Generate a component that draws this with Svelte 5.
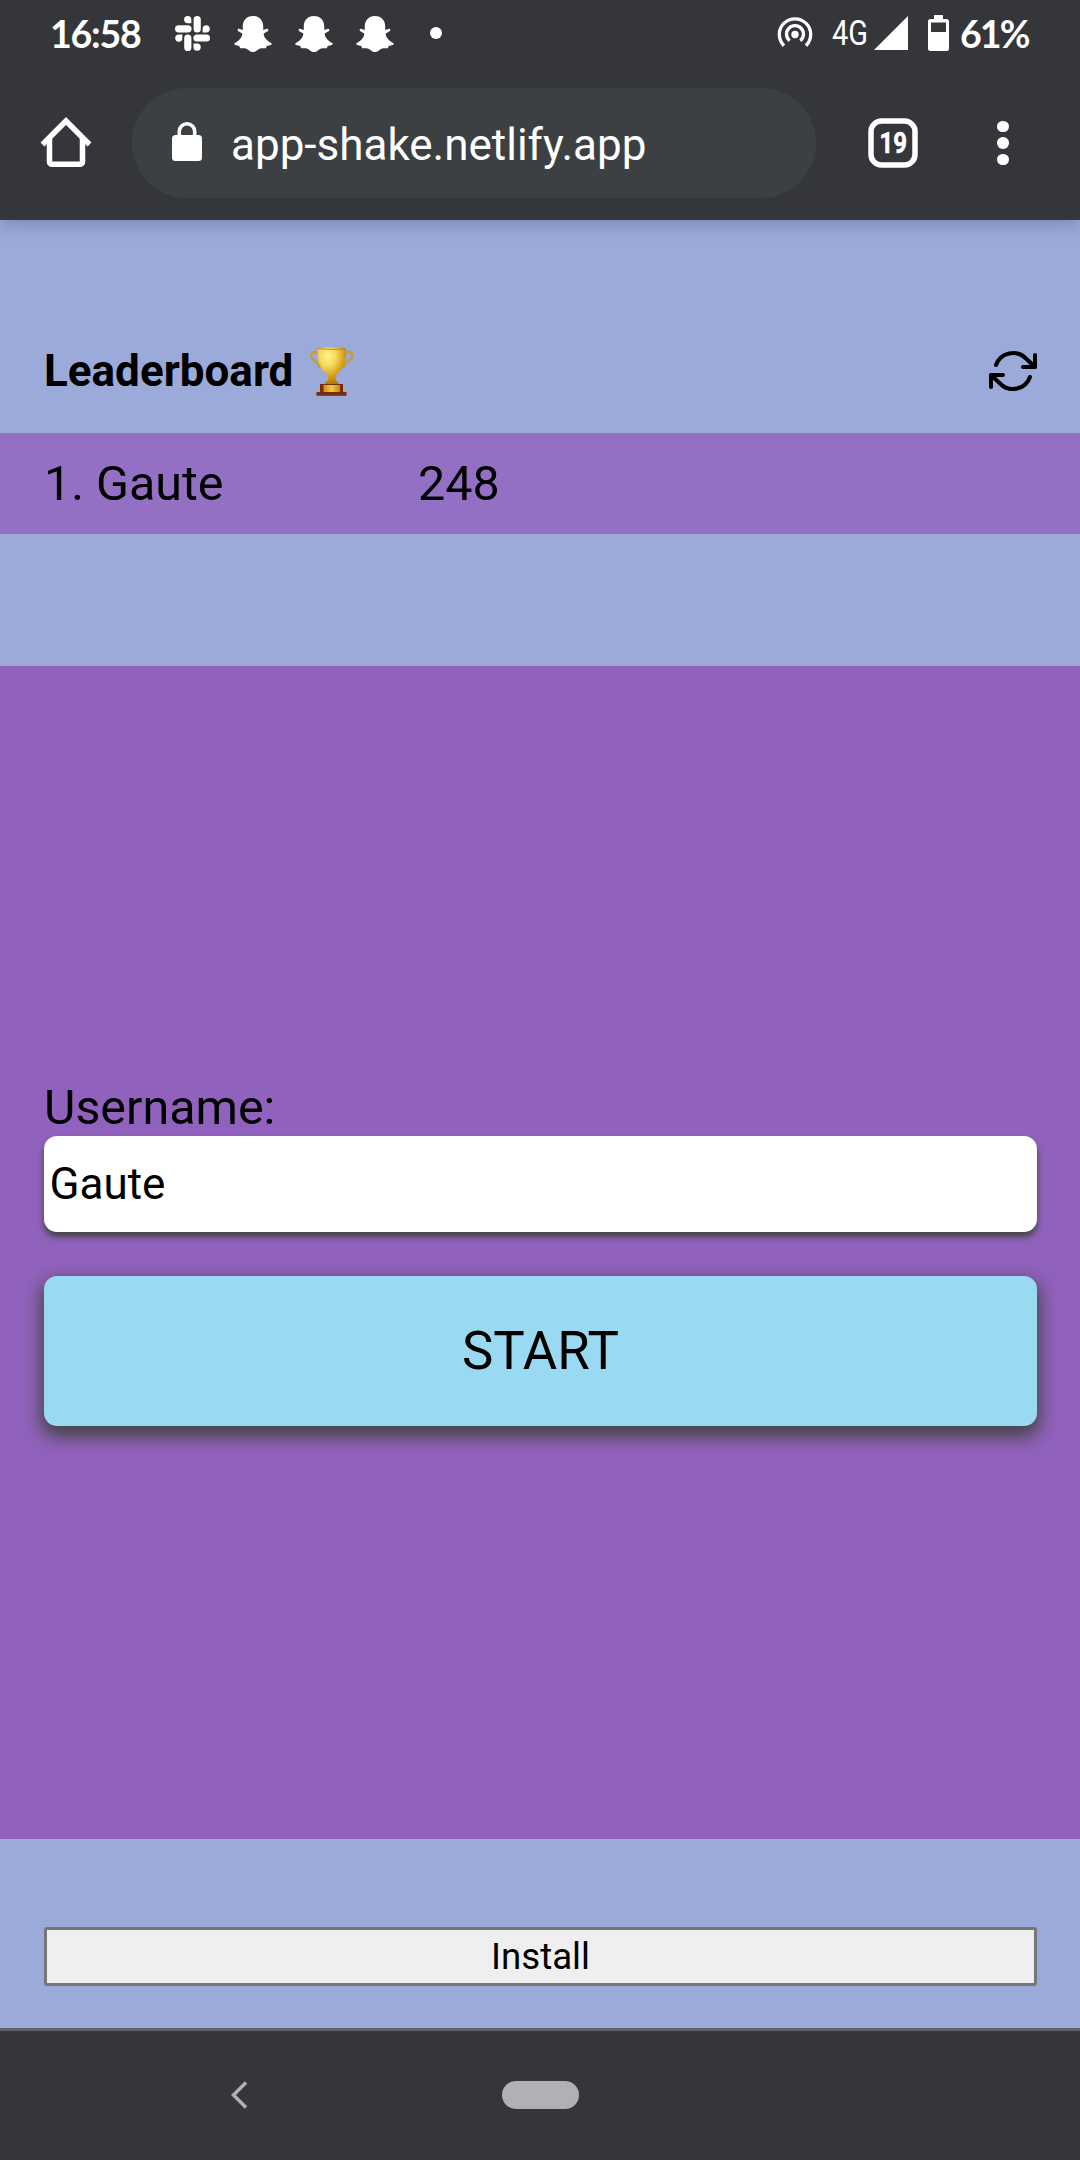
<script>
  const snaps = [0, 1, 2];
  const leaders = [{ name: 'Gaute', score: 248 }];
  let username = $state('Gaute');
</script>

<div class="screen">
  <header class="chrome">
    <div class="status">
      <div class="left">
        <span class="clock">16:58</span>
        <svg class="slack" width="35" height="35" viewBox="0 0 35 35" fill="#fff">
          <rect x="18.6" y="0" width="7.2" height="16.6" rx="3.6" />
          <path d="M12.7 0a3.6 3.6 0 1 0 0 7.2h3.6V3.6A3.6 3.6 0 0 0 12.7 0Z" />
          <rect x="0" y="9.2" width="16.6" height="7.2" rx="3.6" />
          <path d="M27.6 16.4v-3.6a3.6 3.6 0 1 1 3.6 3.6Z" />
          <rect x="18.4" y="18.4" width="16.6" height="7.2" rx="3.6" />
          <path d="M18.5 27.6h3.6a3.6 3.6 0 1 1-3.6 3.6Z" />
          <rect x="9.2" y="18.4" width="7.2" height="16.6" rx="3.6" />
          <path d="M7.4 18.5v3.6a3.6 3.6 0 1 1-3.6-3.6Z" />
        </svg>
        {#each snaps as s (s)}
          <svg class="snap" width="38" height="36" viewBox="0 0 38 36" fill="#fff">
            <path d="M19 0C12.600 0 8.800 4.500 8.800 10.300V14L5 12.800C3.300 12.800 3.300 14.600 4.300 15.300L8.300 17.600C8.300 21.500 4.600 25.300 .8 27C-.2 27.600 .1 28.500 1.200 28.900L5.300 30.100L6.100 32.300L10.700 32.200C13.800 32.400 15.600 36 19 36C22.400 36 24.200 32.400 27.300 32.200L31.900 32.300L32.700 30.100L36.800 28.900C37.900 28.500 38.200 27.600 37.200 27C33.400 25.300 29.700 21.500 29.700 17.600L33.700 15.300C34.700 14.600 34.700 12.800 33 12.800L29.200 14V10.300C29.200 4.500 25.400 0 19 0Z" />
          </svg>
        {/each}
        <span class="more"></span>
      </div>
      <div class="right">
        <svg width="36" height="32" viewBox="0 0 36 32" fill="none" stroke="#fff" stroke-width="3.300">
          <circle cx="18" cy="17.500" r="3.700" fill="#fff" stroke="none" />
          <path d="M12.700 23.700A8.500 8.500 0 1 1 23.300 23.700" />
          <path d="M7 28.700A15.700 15.700 0 1 1 29 28.700" />
        </svg>
        <svg class="net" width="38" height="36" viewBox="0 0 38 36">
          <text x="0" y="30" textLength="36" lengthAdjust="spacingAndGlyphs">4G</text>
        </svg>
        <svg class="signal" width="34" height="34" viewBox="0 0 34 34" fill="#fff"><path d="M34 0V34H0Z" /></svg>
        <svg class="battery" width="21" height="36" viewBox="0 0 21 36">
          <path fill="#fff" fill-rule="evenodd" d="M6 0H15V4H18.500A2.500 2.500 0 0 1 21 6.500V33.500A2.500 2.500 0 0 1 18.500 36H2.500A2.500 2.500 0 0 1 0 33.500V6.500A2.500 2.500 0 0 1 2.500 4H6ZM3 7.500V17H18V7.500Z" />
        </svg>
        <span class="percent">61%</span>
      </div>
    </div>
    <div class="toolbar">
      <svg class="home" width="52" height="52" viewBox="0 0 52 52" fill="none" stroke="#fff" stroke-width="5.500">
        <path d="M2.500 27.500L26 4L49.500 27.500" />
        <path d="M9.500 21V44.500A2.700 2.700 0 0 0 12.200 47.300H39.800A2.700 2.700 0 0 0 42.500 44.500V21" />
      </svg>
      <div class="omnibox">
        <svg width="30" height="40" viewBox="0 0 30 40">
          <rect x="0" y="13" width="30" height="26" rx="3.500" fill="#fff" />
          <path d="M7.300 14V9.500A7.700 7.700 0 0 1 22.700 9.500V14" fill="none" stroke="#fff" stroke-width="3.600" />
        </svg>
        <span>app-shake.netlify.app</span>
      </div>
      <svg class="tabs" width="50" height="50" viewBox="0 0 50 50">
        <rect x="3" y="3" width="44" height="44" rx="10.500" fill="none" stroke="#fff" stroke-width="5.500" />
        <text x="11.500" y="34.500" textLength="27.500" lengthAdjust="spacingAndGlyphs">19</text>
      </svg>
      <div class="menu"><i></i><i></i><i></i></div>
    </div>
  </header>

  <section class="board">
    <div class="heading">
      <h3>Leaderboard</h3>
      <svg class="trophy" width="44" height="49" viewBox="0 0 44 49">
        <defs>
          <radialGradient id="cup" cx=".36" cy=".22" r=".75">
            <stop offset="0" stop-color="#fff38a" />
            <stop offset=".35" stop-color="#f6dc62" />
            <stop offset=".8" stop-color="#d19910" />
            <stop offset="1" stop-color="#b77b00" />
          </radialGradient>
          <linearGradient id="plate">
            <stop offset="0" stop-color="#c9940c" />
            <stop offset=".5" stop-color="#eccb50" />
            <stop offset="1" stop-color="#c48a08" />
          </linearGradient>
        </defs>
        <g fill="none" stroke="#c2a030" stroke-width="2.300">
          <path d="M9 7.500C6 3 1.200 4.500 1.200 9C1.200 14 9 14.500 10 19.500H7.500" />
          <path d="M34.500 7.500C37.500 3 42.300 4.500 42.300 9C42.300 14 34.500 14.500 33.500 19.500H36" />
        </g>
        <path fill="url(#cup)" d="M7.500 1.500C11.500 0 32 0 36 1.500C36 13 35 19.500 28.500 25.500C25 28.500 24.500 32 26.500 34C28 35.500 29 36 29 38H14.500C14.500 36 15.500 35.500 17 34C19 32 18.500 28.500 15 25.500C8.500 19.500 7.500 13 7.500 1.500Z" />
        <path fill="none" stroke="#b58a20" stroke-width="1" d="M8 1.500C14 2.600 29.500 2.600 35.500 1.500" />
        <path fill="#7b2b0c" d="M10 37H33V45H36.500V48.800H6.500V45H10Z" />
        <path fill="url(#plate)" d="M13.500 38H30V45H13.500Z" />
      </svg>
      <svg class="refresh" width="48" height="48" viewBox="0 0 24 24" fill="none" stroke="#000" stroke-width="2" stroke-linecap="round" stroke-linejoin="round">
        <path d="M23 4v6h-6" />
        <path d="M1 20v-6h6" />
        <path d="M3.510 9a9 9 0 0 1 14.850-3.360L23 10M1 14l4.640 4.360A9 9 0 0 0 20.490 15" />
      </svg>
    </div>
    {#each leaders as l, i (l.name)}
      <div class="row"><span>{i + 1}. {l.name}</span><span>{l.score}</span></div>
    {/each}
  </section>

  <main>
    <label for="username">Username:</label>
    <input id="username" bind:value={username} />
    <button class="start">START</button>
  </main>

  <footer><button class="install">Install</button></footer>

  <nav>
    <svg class="back" width="19" height="28" viewBox="0 0 19 28" fill="none" stroke="#afb1b3" stroke-width="3.500"><path d="M16 1.500L3.500 14L16 26.500" /></svg>
    <span class="handle"></span>
  </nav>
</div>

<style>
  :global(body) { margin: 0; }
  .screen {
    width: 1080px;
    height: 2160px;
    display: flex;
    flex-direction: column;
    background: #9baad9;
    font-family: Roboto, "Liberation Sans", sans-serif;
    color: #000;
    overflow: hidden;
  }
  svg { display: block; flex: none; overflow: visible; }
  .chrome {
    height: 220px;
    flex: none;
    background: #35363a;
    color: #fff;
    box-shadow: 0 2px 18px rgba(50, 50, 80, .35);
  }
  .status {
    height: 66px;
    display: flex;
    justify-content: space-between;
    padding: 0 51px 0 50px;
    box-sizing: border-box;
  }
  .left, .right { display: flex; align-items: center; }
  .clock, .percent {
    font: 700 37.500px/46px Lato, sans-serif;
    white-space: nowrap;
  }
  .clock { width: 125px; padding-top: 2px; letter-spacing: -1.200px; }
  .slack { margin-right: 24px; }
  .snap { margin: 1px 23px 0 0; }
  .more { width: 12px; height: 12px; border-radius: 50%; background: #fff; margin-left: 13px; }
  .net { margin-left: 19px; }
  .net text { font-size: 35px; fill: #fff; }
  .signal { margin-left: 4px; }
  .battery { margin: 0 11px 0 20px; }
  .percent { padding-top: 2px; width: 69px; letter-spacing: -1.900px; }
  .toolbar { height: 154px; display: flex; align-items: center; padding: 0 64px 0 40px; box-sizing: border-box; }
  .omnibox {
    width: 684px;
    height: 110px;
    margin: 0 52px 0 40px;
    border-radius: 55px;
    background: #3c4043;
    display: flex;
    align-items: center;
    padding-left: 40px;
    gap: 29px;
    box-sizing: border-box;
    font-size: 44px;
  }
  .omnibox svg { margin-bottom: 3px; }
  .omnibox span { padding-top: 4px; }
  .tabs text { font-size: 29px; font-weight: 700; fill: #fff; stroke: #fff; stroke-width: .6px; }
  .menu { display: flex; flex-direction: column; gap: 5px; margin-left: auto; margin-right: 7.500px; }
  .menu i { width: 11.500px; height: 11.500px; border-radius: 50%; background: #fff; }

  .board { height: 446px; flex: none; padding-top: 111px; box-sizing: border-box; }
  .heading { height: 102px; display: flex; align-items: flex-start; padding: 0 43px 0 44px; }
  h3 { margin: 14px 17px 0 0; font-size: 44px; line-height: 52px; font-weight: 700; }
  .trophy { margin-top: 16px; }
  .refresh { margin: 15.500px 0 0 auto; }
  .row {
    height: 101px;
    background: #9370c4;
    padding: 0 44px;
    display: grid;
    grid-template-columns: 374px 1fr;
    align-items: center;
    font-size: 48.400px;
  }
  main {
    height: 1173px;
    flex: none;
    background: #9162bd;
    padding: 0 43px 0 44px;
    box-sizing: border-box;
    display: flex;
    flex-direction: column;
    justify-content: center;
  }
  label { font-size: 48.400px; line-height: 57px; }
  input {
    height: 96px;
    border: 0;
    border-radius: 13px;
    padding: 0 5.500px;
    font: 44px Roboto, sans-serif;
    box-shadow: 0 5px 6px #444;
    outline: 0;
  }
  .start {
    height: 150px;
    margin-top: 44px;
    border: 0;
    border-radius: 13px;
    background: #99daf2;
    color: #000;
    font: 52.800px Roboto, sans-serif;
    box-shadow: 0 8px 18px 3px #444;
  }
  footer { height: 189px; flex: none; padding: 88px 43px 0 44px; box-sizing: border-box; }
  .install {
    width: 100%;
    height: 59px;
    border: 3px solid #767676;
    border-radius: 3px;
    background: #efefef;
    color: #000;
    font: 36.670px Roboto, sans-serif;
    padding: 0;
  }
  nav {
    height: 132px;
    flex: none;
    border-top: 3px solid #5f6368;
    background: #35363a;
    padding-bottom: 2px;
    box-sizing: border-box;
    display: flex;
    align-items: center;
  }
  .back { margin-left: 230px; }
  .handle { width: 77px; height: 28px; margin-left: 253px; border-radius: 14px; background: #afb1b3; }
</style>
